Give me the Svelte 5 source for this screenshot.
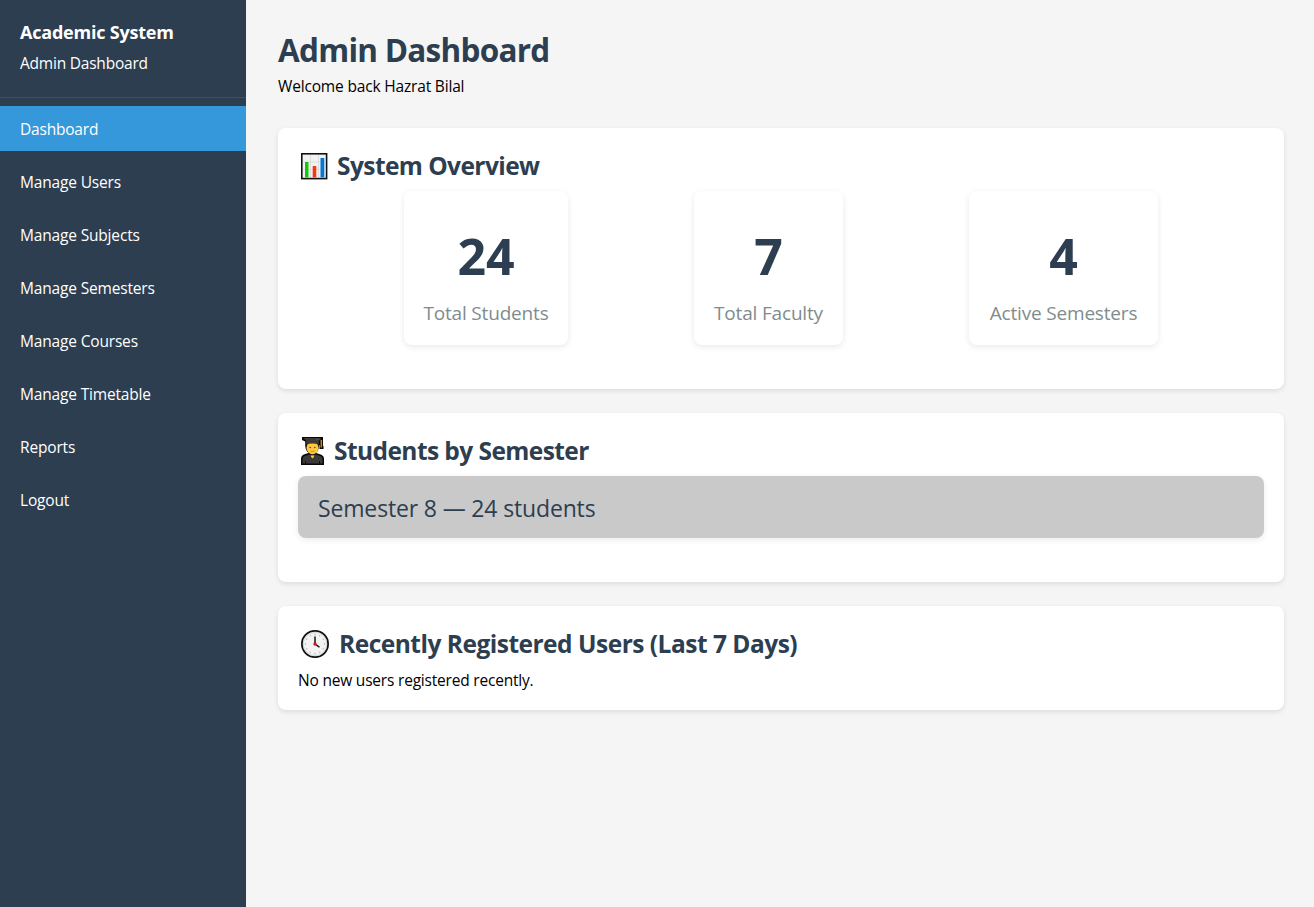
<script>
  const links = [
    { label: 'Dashboard', active: true },
    { label: 'Manage Users' },
    { label: 'Manage Subjects' },
    { label: 'Manage Semesters' },
    { label: 'Manage Courses' },
    { label: 'Manage Timetable' },
    { label: 'Reports' },
    { label: 'Logout' }
  ];
  const stats = [
    { value: 24, label: 'Total Students', width: 164 },
    { value: 7, label: 'Total Faculty', width: 149 },
    { value: 4, label: 'Active Semesters', width: 189 }
  ];
  const ticks = Array.from({ length: 12 }, (_, i) => i * 30);
</script>

<div class="layout">
  <aside>
    <header class="brand">
      <h3>Academic System</h3>
      <p>Admin Dashboard</p>
    </header>
    <nav>
      {#each links as link}
        <a href="#top" class:active={link.active}>{link.label}</a>
      {/each}
    </nav>
  </aside>

  <main>
    <header class="heading">
      <h1>Admin Dashboard</h1>
      <p>Welcome back Hazrat Bilal</p>
    </header>

    <section class="overview">
      <h2>
        <svg class="chart" width="30" height="30" viewBox="0 0 30 30">
          <rect x="2" y="2" width="26.4" height="26.4" fill="#111" />
          <rect x="3.6" y="3.6" width="23.2" height="23.2" fill="#f2f2f2" />
          <path d="M11.500 4v22M19.500 4v22M4 11h22.500M4 18.500h22.500" stroke="#dcdcdc" stroke-width="1" />
          <rect x="6" y="11" width="3.500" height="15.500" fill="#16c60c" />
          <rect x="13.700" y="15" width="3.600" height="11.500" fill="#f03a17" />
          <rect x="21.500" y="7" width="3.800" height="19.500" fill="#0078d7" />
        </svg>
        <span>System Overview</span>
      </h2>
      <div class="stats">
        {#each stats as stat}
          <div class="stat" style="width: {stat.width}px">
            <strong>{stat.value}</strong>
            <span>{stat.label}</span>
          </div>
        {/each}
      </div>
    </section>

    <section class="semesters">
      <h2>
        <svg class="student" width="27" height="30" viewBox="0 0 27 30">
          <path d="M2 29v-6q0-3.500 3.500-4.700l4-1.300Q6.500 14.500 6.200 9.500V5.500L3 4V1h21v9h.500v3h-4V9h-.500q0 5.500-3 8l4 1.300q4 1.200 4 4.700v6z" fill="#080808" />
          <path d="M3.500 27.500V23q0-2.500 3-3.300l4-1.200h6l4 1.200q3 .8 3 3.300v4.500z" fill="#3b3a39" />
          <path d="M11.800 19.500h3.400l-.3 1.500-1.400 1.600-1.400-1.600z" fill="#ffc83d" />
          <ellipse cx="13.500" cy="11.800" rx="6" ry="6.400" fill="#ffc83d" />
          <path d="M7.200 4h12.600v4.800q-6.300-2.400-12.600 0z" fill="#3b3a39" />
          <path d="M4 2h18l-3 3.200H8z" fill="#3b3a39" />
          <path d="M22.300 4v7.500" stroke="#c98816" stroke-width="1.500" fill="none" />
          <path d="M17 3.300l5 .7" stroke="#80591c" stroke-width=".6" />
          <circle cx="11.200" cy="11.500" r=".75" fill="#49351f" />
          <circle cx="15.800" cy="11.500" r=".75" fill="#49351f" />
          <path d="M11.500 15q2 1 4 0" stroke="#c47a1b" stroke-width=".8" fill="none" />
          <path d="M6.500 25v3M20.500 25v3" stroke="#111" stroke-width="1" />
        </svg>
        <span>Students by Semester</span>
      </h2>
      <div class="semester">Semester 8 — 24 students</div>
    </section>

    <section class="recent">
      <h2>
        <svg class="clock" width="32" height="30" viewBox="0 0 32 30">
          <circle cx="17" cy="15" r="13.100" fill="#f3f3f3" stroke="#111" stroke-width="1.800" />
          <circle cx="17" cy="15" r="11.700" fill="none" stroke="#d2d2d2" stroke-width=".9" />
          {#each ticks as angle}
            <circle cx="17" cy="5.500" r=".65" fill="#aaa" transform="rotate({angle} 17 15)" />
          {/each}
          <path d="M17 15V8M17 15l4 2.800" stroke="#151515" stroke-width="1.500" stroke-linecap="round" />
          <circle cx="17" cy="15" r="1.700" fill="#e81224" />
        </svg>
        <span>Recently Registered Users (Last 7 Days)</span>
      </h2>
      <p>No new users registered recently.</p>
    </section>
  </main>
</div>

<style>
  :global(body) { margin: 0; background: #f5f5f5; }
  h1, h2, h3, p { margin: 0; }
  .layout {
    display: flex;
    min-height: 907px;
    font-family: 'Open Sans', 'Noto Sans', sans-serif;
    font-size: 15.5px;
    line-height: 21px;
    letter-spacing: -0.17px;
    color: #000;
  }
  aside { width: 246px; flex: none; background: #2c3e50; color: #fff; }
  .brand { box-sizing: border-box; height: 98px; padding: 20px 20px 0; border-bottom: 1px solid #3f5062; }
  .brand h3 { font-size: 18px; line-height: 25px; font-weight: 700; letter-spacing: -0.22px; }
  .brand p { margin-top: 8px; letter-spacing: -0.22px; }
  nav { display: flex; flex-direction: column; gap: 8px; padding-top: 8px; }
  nav a { height: 45px; line-height: 46px; padding-left: 20px; color: #fff; text-decoration: none; }
  nav a.active { background: #3498db; letter-spacing: -0.2px; }
  main { flex: 1; padding: 28px 30px 0 32px; }
  .heading { height: 100px; }
  h1 { font-size: 31.5px; line-height: 43px; color: #2c3e50; font-weight: 700; letter-spacing: -0.73px; }
  .heading p { margin-top: 5px; }
  section {
    box-sizing: border-box;
    margin-bottom: 24px;
    padding: 20px;
    background: #fff;
    border-radius: 8px;
    box-shadow: 0 2px 5px rgba(0, 0, 0, 0.1);
  }
  .overview { height: 261px; }
  .semesters { height: 169px; }
  .recent { height: 104px; }
  h2 { display: flex; align-items: center; height: 36px; font-size: 24.5px; color: #2c3e50; font-weight: 700; letter-spacing: -0.57px; white-space: nowrap; }
  h2 svg { flex: none; margin-left: 1px; }
  h2 span { padding-bottom: 2px; }
  .chart { margin-right: 8px; }
  .student { margin-right: 8px; }
  .clock { margin: 0 9px 0 0; }
  .recent h2 { letter-spacing: -0.5px; }
  .stats { display: flex; justify-content: space-evenly; gap: 20px; margin-top: 7px; }
  .stat {
    box-sizing: border-box;
    height: 154px;
    padding-top: 32px;
    display: flex;
    flex-direction: column;
    align-items: center;
    border-radius: 8px;
    box-shadow: 0 2px 6px rgba(0, 0, 0, 0.09);
    white-space: nowrap;
  }
  .stat strong { font-size: 50px; line-height: 67px; color: #2c3e50; letter-spacing: 0; }
  .stat span { margin-top: 9px; font-size: 19px; line-height: 28px; color: #7f8c8d; letter-spacing: -0.18px; }
  .semester {
    height: 62px;
    line-height: 64px;
    margin-top: 7px;
    padding-left: 20px;
    border-radius: 8px;
    background: #c9c9c9;
    box-shadow: 0 2px 6px rgba(0, 0, 0, 0.08);
    font-size: 23px;
    letter-spacing: -0.15px;
    color: #2c3e50;
  }
  .recent p { margin-top: 8px; letter-spacing: -0.2px; }
</style>
